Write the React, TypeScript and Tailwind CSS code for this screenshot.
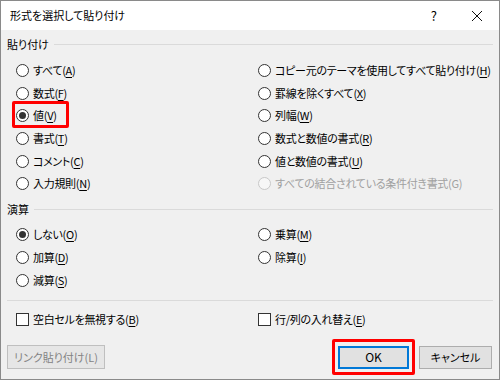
import type { ReactNode } from "react";

const font = "font-['Noto_Sans_CJK_JP',sans-serif] [font-feature-settings:'palt']";

function Key({ k }: { k: string }) {
  return (
    <>
      (<span className="underline underline-offset-2">{k}</span>)
    </>
  );
}

function Radio({
  label,
  k,
  checked,
  disabled,
}: {
  label: string;
  k: string;
  checked?: boolean;
  disabled?: boolean;
}) {
  return (
    <div className="flex h-[22.7px] items-center">
      <span
        className={`flex h-[13px] w-[13px] shrink-0 items-center justify-center rounded-full border ${
          disabled ? "border-[#c8c8c8] bg-[#f7f7f7]" : "border-[#333] bg-white"
        }`}
      >
        {checked && <span className="h-[7px] w-[7px] rounded-full bg-[#333]" />}
      </span>
      <span
        className={`ml-[4px] whitespace-nowrap text-[11px] leading-none tracking-[-0.3px] ${
          disabled ? "text-[#a0a0a0]" : "text-black"
        }`}
      >
        {label}
        {disabled ? `(${k})` : <Key k={k} />}
      </span>
    </div>
  );
}

function Check({ label, k }: { label: string; k: string }) {
  return (
    <div className="flex h-[22.7px] items-center">
      <span className="h-[13px] w-[13px] shrink-0 border border-[#333] bg-white" />
      <span className="ml-[4px] whitespace-nowrap text-[11px] leading-none tracking-[-0.3px] text-black">
        {label}
        <Key k={k} />
      </span>
    </div>
  );
}

function Header({ children }: { children: ReactNode }) {
  return (
    <div className="flex h-[16px] items-center">
      <span className="text-[11px] leading-none text-black">{children}</span>
      <span className="ml-[5px] h-px flex-1 bg-[#dadada]" />
    </div>
  );
}

function Highlight({ className }: { className: string }) {
  return (
    <span
      className={`pointer-events-none absolute rounded-[2px] border-[3px] border-[#ff0000] ${className}`}
    />
  );
}

export default function App() {
  return (
    <div className={`${font} h-[380px] w-[500px] overflow-hidden`}>
      <div className="flex h-full flex-col border border-[#8a8a8a] bg-[#f0f0f0]">
        <div className="flex h-[29px] shrink-0 items-center bg-white">
          <span className="ml-[9px] text-[11px] leading-none text-black">
            形式を選択して貼り付け
          </span>
          <span className="ml-auto mr-[34px] text-[13px] leading-none text-black">?</span>
          <svg width="12" height="12" viewBox="0 0 12 12" className="mr-[16px]">
            <path d="M1 1L11 11M11 1L1 11" stroke="#111" strokeWidth="1" />
          </svg>
        </div>

        <div className="flex flex-1 flex-col px-[6px]">
          <div className="mt-[6px]">
            <Header>貼り付け</Header>
          </div>
          <div className="relative mt-[7px] grid grid-cols-[242px_1fr] pl-[9px]">
            <div>
              <Radio label="すべて" k="A" />
              <Radio label="数式" k="F" />
              <Radio label="値" k="V" checked />
              <Radio label="書式" k="T" />
              <Radio label="コメント" k="C" />
              <Radio label="入力規則" k="N" />
            </div>
            <div>
              <Radio label="コピー元のテーマを使用してすべて貼り付け" k="H" />
              <Radio label="罫線を除くすべて" k="X" />
              <Radio label="列幅" k="W" />
              <Radio label="数式と数値の書式" k="R" />
              <Radio label="値と数値の書式" k="U" />
              <Radio label="すべての結合されている条件付き書式" k="G" disabled />
            </div>
            <Highlight className="left-[5px] top-[42px] h-[27px] w-[57px]" />
          </div>

          <div className="mt-[6px]">
            <Header>演算</Header>
          </div>
          <div className="mt-[6.5px] grid grid-cols-[242px_1fr] pl-[9px]">
            <div>
              <Radio label="しない" k="O" checked />
              <Radio label="加算" k="D" />
              <Radio label="減算" k="S" />
            </div>
            <div>
              <Radio label="乗算" k="M" />
              <Radio label="除算" k="I" />
            </div>
          </div>

          <div className="mt-[8px] h-px bg-[#dadada]" />

          <div className="mt-[7.5px] grid grid-cols-[242px_1fr] pl-[9px]">
            <Check label="空白セルを無視する" k="B" />
            <Check label="行/列の入れ替え" k="E" />
          </div>

          <div className="mt-[14.5px] flex items-center">
            <button
              type="button"
              className="flex h-[24px] w-[98px] items-center justify-center border border-[#bfbfbf] bg-[#e6e6e6] text-[11px] leading-none text-[#838383]"
            >
              リンク貼り付け(L)
            </button>
            <div className="relative ml-auto">
              <button
                type="button"
                className="flex h-[23px] w-[71px] items-center justify-center border-2 border-[#0078d7] bg-[#e1e1e1] text-[12px] leading-none text-black"
              >
                OK
              </button>
              <Highlight className="-left-[6px] -top-[7px] h-[36px] w-[83px]" />
            </div>
            <button
              type="button"
              className="ml-[10px] mr-[1px] flex h-[23px] w-[73px] items-center justify-center border border-[#adadad] bg-[#e1e1e1] text-[11px] leading-none text-black"
            >
              キャンセル
            </button>
          </div>
        </div>
      </div>
    </div>
  );
}
